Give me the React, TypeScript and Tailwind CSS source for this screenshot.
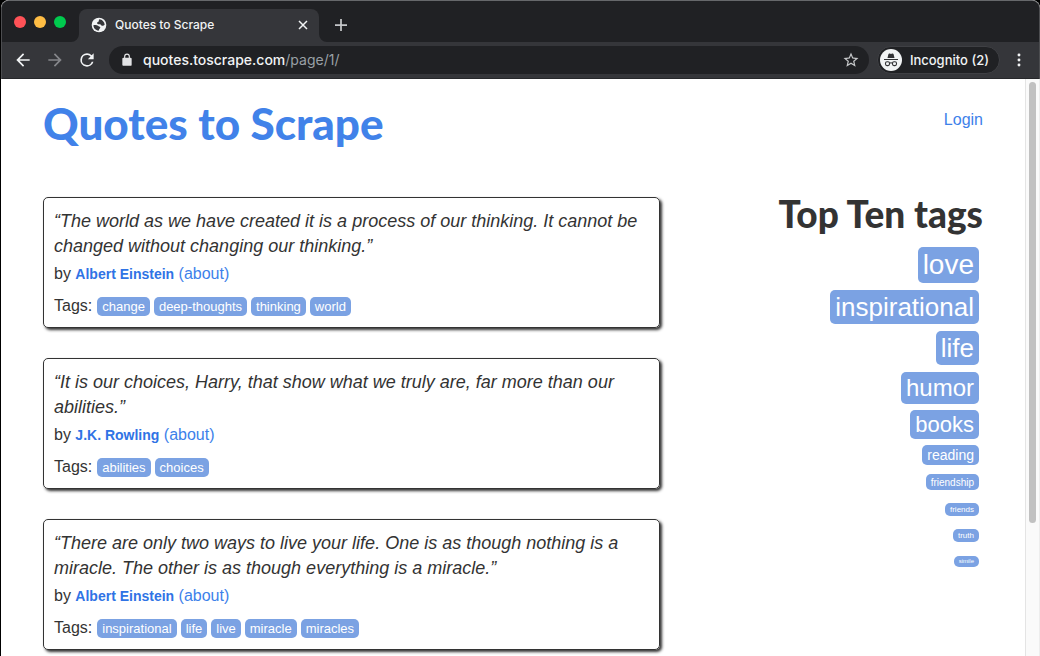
import type { ReactNode } from "react";

type Quote = { lines: string; author: string; tags: string[] };

const quotes: Quote[] = [
  {
    lines:
      "“The world as we have created it is a process of our thinking. It cannot be changed without changing our thinking.”",
    author: "Albert Einstein",
    tags: ["change", "deep-thoughts", "thinking", "world"],
  },
  {
    lines:
      "“It is our choices, Harry, that show what we truly are, far more than our abilities.”",
    author: "J.K. Rowling",
    tags: ["abilities", "choices"],
  },
  {
    lines:
      "“There are only two ways to live your life. One is as though nothing is a miracle. The other is as though everything is a miracle.”",
    author: "Albert Einstein",
    tags: ["inspirational", "life", "live", "miracle", "miracles"],
  },
];

const topTags = [
  { name: "love", row: "h-[43px]", box: "h-9 text-[28px]" },
  { name: "inspirational", row: "h-[41px]", box: "h-[34px] text-[26px]" },
  { name: "life", row: "h-[41px]", box: "h-[34px] text-[26px]" },
  { name: "humor", row: "h-[38px]", box: "h-8 text-2xl" },
  { name: "books", row: "h-[35px]", box: "h-[29px] text-[22px]" },
  { name: "reading", row: "h-[29px]", box: "h-5 text-sm" },
  { name: "friendship", row: "h-[29px]", box: "h-4 text-[10px]" },
  { name: "friends", row: "h-[26px]", box: "h-[13px] text-[8px]" },
  { name: "truth", row: "h-[27px]", box: "h-[13px] text-[8px]" },
  { name: "simile", row: "h-[26px]", box: "h-[11px] text-[6px]" },
];

function Icon({ className, children }: { className: string; children: ReactNode }) {
  return (
    <svg viewBox="0 0 24 24" fill="currentColor" aria-hidden="true" className={className}>
      {children}
    </svg>
  );
}

function TabStrip() {
  return (
    <div className="flex h-[41px] items-end bg-[#202124]">
      <div className="flex gap-2 self-center px-3">
        <button aria-label="Close window" className="size-3 rounded-full bg-[#ff5257]" />
        <button aria-label="Minimize window" className="size-3 rounded-full bg-[#ffbd44]" />
        <button aria-label="Zoom window" className="size-3 rounded-full bg-[#00ca4e]" />
      </div>
      <div className="relative ml-px flex h-[33px] w-60 items-center rounded-t-lg bg-[#35363a] pb-0.5 pl-3 pr-2.5 text-[#f1f3f4]">
        <svg viewBox="0 0 8 8" aria-hidden="true" className="absolute -left-2 bottom-0 size-2">
          <path fill="#35363a" d="M8 0v8H0a8 8 0 0 0 8-8z" />
        </svg>
        <svg viewBox="0 0 8 8" aria-hidden="true" className="absolute -right-2 bottom-0 size-2">
          <path fill="#35363a" d="M0 0v8h8a8 8 0 0 1-8-8z" />
        </svg>
        <Icon className="size-4">
          <circle cx="12" cy="12" r="11" />
          <path
            fill="#35363a"
            d="M12.500 3.500c4 .2 7.500 3.800 8 8-1.200 1.500-2.500 2-4 1.500-1.500-.4-1.500-2-3-2.200-1.500-.3-2.800.3-4-.8-1-1 .2-2.300 1.500-2.700 1.600-.5 0-2.600 1.500-3.800zM3.500 12.500c2.500-.8 5.500-.6 7 .5 1.400 1 2.500 1 3.300 2.200.8 1.300-1 1.800-1.500 3-.3 1-.6 1.700-1 2.300-4.200-.3-7.500-3.700-7.800-8z"
          />
        </Icon>
        <span className="flex-1 pl-2 text-xs font-medium">Quotes to Scrape</span>
        <button aria-label="Close tab">
          <Icon className="size-3">
            <path d="M4 4l16 16M20 4 4 20" stroke="currentColor" strokeWidth="3" />
          </Icon>
        </button>
      </div>
      <button aria-label="New tab" className="self-center pl-4 pt-1.5 text-[#c4c6c9]">
        <Icon className="size-3">
          <path d="M12 0v24M0 12h24" stroke="currentColor" strokeWidth="3.500" />
        </Icon>
      </button>
    </div>
  );
}

function Toolbar() {
  return (
    <div className="flex h-[37px] items-center border-b border-[#27282b] bg-[#35363a] pr-3 text-[#f1f3f4]">
      <div className="flex items-center gap-3 pl-[11px]">
        <button aria-label="Back">
          <Icon className="size-5">
            <path d="M20 11H7.830l5.590-5.590L12 4l-8 8 8 8 1.410-1.410L7.830 13H20v-2z" />
          </Icon>
        </button>
        <button aria-label="Forward" className="text-[#85868a]">
          <Icon className="size-5">
            <path d="m12 4-1.410 1.410L16.170 11H4v2h12.170l-5.580 5.590L12 20l8-8z" />
          </Icon>
        </button>
        <button aria-label="Reload">
          <Icon className="size-5">
            <path d="M17.650 6.350A7.960 7.960 0 0 0 12 4a8 8 0 1 0 7.730 10h-2.080A6 6 0 1 1 12 6c1.660 0 3.140.69 4.220 1.780L13 11h7V4l-2.350 2.350z" />
          </Icon>
        </button>
      </div>
      <div className="ml-3 flex h-7 flex-1 items-center rounded-full bg-[#202124] pl-[11px] pr-[9px]">
        <Icon className="size-3.5 text-[#e2e3e5]">
          <path d="M18 8h-1V6A5 5 0 0 0 7 6v2H6a2 2 0 0 0-2 2v10c0 1.100.9 2 2 2h12a2 2 0 0 0 2-2V10a2 2 0 0 0-2-2zM9 6a3 3 0 1 1 6 0v2H9z" />
        </Icon>
        <a href="#top" className="flex-1 pl-[9px] text-sm text-[#9aa0a6]">
          <span className="font-medium text-[#f1f3f4]">quotes.toscrape.com</span>/page/1/
        </a>
        <button aria-label="Bookmark this page" className="text-[#c6c8ca]">
          <Icon className="size-[18px]">
            <path d="m22 9.240-7.190-.62L12 2 9.190 8.630 2 9.240l5.460 4.730L5.820 21 12 17.270 18.180 21l-1.630-7.030zM12 15.400l-3.760 2.270 1-4.280-3.320-2.880 4.380-.38L12 6.100l1.710 4.040 4.380.38-3.320 2.880 1 4.280z" />
          </Icon>
        </button>
      </div>
      <button className="ml-2 flex h-7 items-center rounded-full border border-[#3f4044] bg-[#202124] pl-0.5 pr-2.5 text-[13px] font-medium">
        <svg viewBox="0 0 22 22" aria-hidden="true" className="mr-2 size-[22px]">
          <circle cx="11" cy="11" r="11" fill="#f1f3f4" />
          <path fill="#303134" d="M7.500 9 8.400 5.200c.2-.7.800-.9 1.400-.7l1.200.4 1.200-.4c.6-.2 1.200 0 1.400.7L14.500 9zM4 10h14v1H4z" />
          <g fill="none" stroke="#303134" strokeWidth="1.100">
            <rect x="5.500" y="12.800" width="4" height="3.800" rx="1.500" />
            <rect x="12.500" y="12.800" width="4" height="3.800" rx="1.500" />
            <path d="M9.500 14.200q1.500-1 3 0" />
          </g>
        </svg>
        <span className="pt-0.5">Incognito (2)</span>
      </button>
      <button aria-label="Browser menu" className="ml-[11px]">
        <Icon className="size-4">
          <circle cx="12" cy="4.500" r="2.200" />
          <circle cx="12" cy="12" r="2.200" />
          <circle cx="12" cy="19.500" r="2.200" />
        </Icon>
      </button>
    </div>
  );
}

function QuoteCard({ quote }: { quote: Quote }) {
  return (
    <article className="rounded-[5px] border border-[#333] px-2.5 pb-2.5 pt-[11px] shadow-[2px_2px_3px_#333]">
      <p className="text-lg leading-[25px] italic">{quote.lines}</p>
      <p className="mt-[3px] h-6 leading-[23px]">
        by <a href="#author" className="text-sm font-bold leading-[23px] text-[#2f73e5]">{quote.author}</a>{" "}
        <a href="#about" className="text-[#3d81ea]">(about)</a>
      </p>
      <div className="mt-2 flex h-[23px] items-center gap-1">
        <span className="pr-px">Tags:</span>
        {quote.tags.map((tag) => (
          <a key={tag} href="#tag" className="mt-0.5 h-[19px] rounded-[5px] bg-[#7ba2e3] px-[5px] text-[13px] leading-[19px] text-white">
            {tag}
          </a>
        ))}
      </div>
    </article>
  );
}

export default function App() {
  return (
    <div id="top" className="h-screen bg-black pl-px font-['Liberation_Sans',Arial,sans-serif] text-[#333]">
      <div className="flex h-full flex-col overflow-hidden rounded-t-lg bg-white">
        <header className="shrink-0 overflow-hidden rounded-t-lg border-x border-t border-x-[#4c4d50] border-t-[#66686b] bg-[#202124] font-[Inter,sans-serif]">
          <TabStrip />
          <Toolbar />
        </header>
        <div className="flex min-h-0 flex-1">
          <main className="min-w-0 flex-1 overflow-hidden px-[42px]">
            <div className="flex h-[118px] justify-between pt-5">
              <h1 className="font-[Lato,sans-serif] text-[44px] font-black leading-[48px]">
                <a href="#top" className="text-[#4182e9]">Quotes to Scrape</a>
              </h1>
              <a href="#login" className="pt-[9px] text-[#3d81ea]">Login</a>
            </div>
            <div className="flex items-start justify-between">
              <div className="flex w-[617px] flex-col gap-[30px]">
                {quotes.map((quote) => (
                  <QuoteCard key={quote.lines} quote={quote} />
                ))}
              </div>
              <aside className="flex flex-col items-end">
                <h2 className="h-[50px] font-[Lato,sans-serif] text-[37px] font-black leading-[34px]">Top Ten tags</h2>
                <div className="flex flex-col items-end pr-1">
                  {topTags.map(({ name, row, box }) => (
                    <div key={name} className={row}>
                      <a href="#tag" className={`flex items-center rounded-[5px] bg-[#7ba2e3] px-[5px] text-white ${box}`}>
                        {name}
                      </a>
                    </div>
                  ))}
                </div>
              </aside>
            </div>
          </main>
          <div className="w-[15px] border-l border-r border-l-[#e4e4e4] border-r-[#ededed] bg-[#fafafa] px-[3px] pt-[3px]">
            <div className="h-[441px] rounded-full bg-[#c1c1c1]" />
          </div>
        </div>
      </div>
    </div>
  );
}
